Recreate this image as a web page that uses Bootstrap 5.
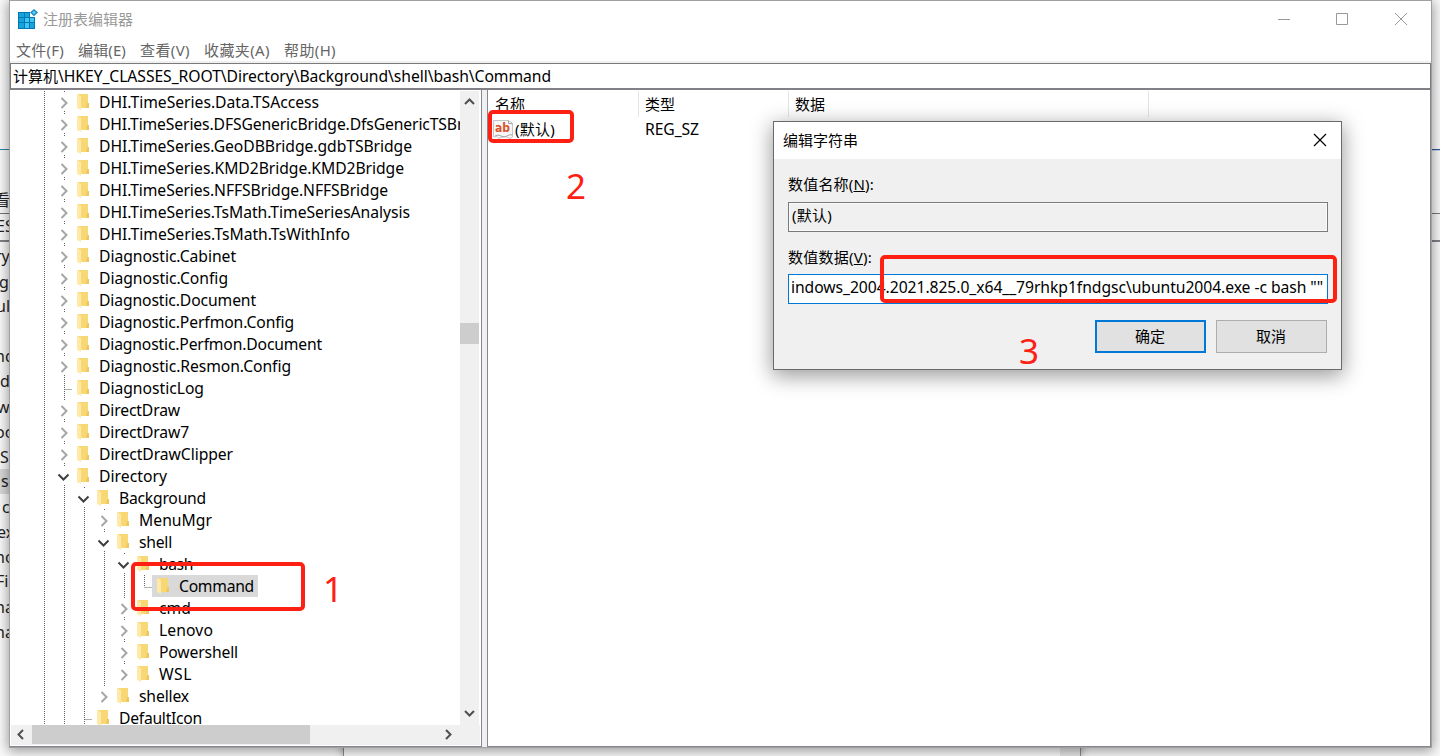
<!DOCTYPE html>
<html lang="zh-CN">
<head>
  <meta charset="UTF-8">
  <meta name="viewport" content="width=device-width, initial-scale=1.0">
  <title>注册表编辑器</title>
  <link href="https://cdn.jsdelivr.net/npm/bootstrap@5.3.0/dist/css/bootstrap.min.css" rel="stylesheet">
  <style>
    body { width: 1440px; height: 756px; background: #fafafa; color: #000; font: 15px/22px "Noto Sans", "Noto Sans CJK SC", sans-serif; }
    svg { display: block; flex: none; }
    .latin { font-size: 15.7px; }

    /* windows behind the editor */
    .back-strip { left: 0; top: 0; width: 10px; height: 756px; }
    .back-strip span { position: absolute; font-size: 16px; line-height: 25px; color: #222; white-space: nowrap; }
    .back-line { position: absolute; left: 0; width: 100%; }
    .back-bottom { left: 343px; top: 740px; width: 738px; height: 16px; border: solid #8c8c8c; border-width: 0 1px; box-shadow: 0 0 10px rgba(0,0,0,.4); background: #fbfbfb; }
    .back-bottom div { width: 20px; background: #e6e6e6; }

    .reg-window { left: 9px; top: 0; width: 1423px; height: 748px; border: 1px solid #a0a0a0; box-shadow: 0 2px 12px 1px rgba(0,0,0,.4); background: #fff; }
    .title-row { height: 37px; color: #999; padding: 0 0 2px 8px; }
    .menu-row { height: 25px; color: #666; gap: 14px; padding-left: 6px; border-bottom: 2px solid #f0f0f0; }
    .menu-row, .menu-row span { line-height: 24px; }
    .path-row { height: 27px; border: 1px solid #7a7a7a; border-bottom: 2px solid #828087; padding-left: 2px; line-height: 24px; }
    .win-buttons { padding-right: 23px; gap: 44px; }
    .win-buttons svg:last-child { margin-left: 1px; }

    .split { height: 657px; background: #f0f0f0; }
    .tree-pane { width: 472px; border-right: 1px solid #828790; border-bottom: 1px solid #828790; background: #fff; padding-top: 1px; }
    .tree-view { width: 450px; height: 634px; }
    .tree-item { height: 22px; flex: none; }
    .tree-item .node-label { line-height: 23px; height: 22px; white-space: pre; padding: 0 4px 0 4px; }
    .is-selected { background: #d9d9d9; }
    .v-scroll { width: 19px; height: 634px; background: #f0f0f0; margin-right: 1px; }
    .v-thumb { height: 21px; background: #cdcdcd; margin-top: 232px; }
    .h-scroll { height: 20px; background: #f0f0f0; margin-left: 1px; margin-right: 1px; }
    .h-thumb { width: 278px; background: #cdcdcd; height: 19px; }

    .value-pane { margin-left: 5px; border-left: 1px solid #828790; border-bottom: 1px solid #828790; border-right: 1px solid #828790; background: #fff; padding-top: 1px; }
    .value-row { height: 25px; }
    .value-row > div { width: 150px; height: 26px; line-height: 26px; padding-left: 6px; }
    .value-row > div:first-child { width: 151px; padding-left: 7px; }
    .value-head > div { border-right: 1px solid #e5e5e5; }
    .value-head > div:last-child { width: 360px; }

    .edit-dialog { left: 773px; top: 121px; width: 569px; height: 249px; border: 1px solid #6a6a6a; background: #f0f0f0; box-shadow: 0 5px 20px 1px rgba(0,0,0,.4); }
    .dialog-title { height: 37px; background: #fff; padding: 0 14px 1px 9px; }
    .dialog-main { padding: 14px 13px 0 14px; }
    .field { height: 30px; border: 1px solid #7a7a7a; line-height: 24px; padding-left: 3px; margin-top: 7px; white-space: pre; overflow: hidden; }
    .field-ro { box-shadow: inset 0 0 0 1px #fafafa; }
    .field-active { border-color: #0078d7; background: #fff; padding-left: 2px; margin-top: 6px; }
    .dlg-btn { width: 111px; height: 33px; border: 1px solid #adadad; background: #e1e1e1; line-height: 30px; padding-right: 1px; }
    .dlg-default { border: 2px solid #0078d7; line-height: 28px; }

    .mark-box { border: 4px solid #ff2014; border-radius: 5px; }
    .mark-num { color: #ff2014; font-size: 35px; line-height: 36px; }
  </style>
</head>
<body class="position-relative overflow-hidden">

  <div class="position-absolute overflow-hidden back-strip" id="backStrip"></div>
  <div class="position-absolute" style="left:1431px;top:0;width:9px;height:756px">
    <div class="back-line" style="top:149px;height:2px;background:#2b579a;border-bottom:1px solid #c8d3e6"></div>
    <div class="back-line" style="top:213px;height:1px;background:#777"></div>
    <div class="back-line" style="top:240px;height:2px;background:#828087"></div>
  </div>
  <div class="position-absolute d-flex justify-content-end back-bottom"><div></div></div>

  <div class="position-absolute d-flex flex-column reg-window">
    <div class="d-flex align-items-center justify-content-between title-row">
      <div class="d-flex align-items-center" style="gap:5px">
        <svg width="20" height="20" viewBox="0 0 20 20">
          <path d="M0 3h12v5h5v12H0z" fill="#0078b4"/>
          <path d="M1 4h5v4H1zM7 4h4v4H7zM1 9h5v4H1zM1 14h5v5H1zM12 14h4v5h-4z" fill="#18a3dc"/>
          <path d="M7 9h4v4H7zM12 9h4v4h-4zM7 14h4v5H7z" fill="#42c5f0"/>
          <path d="M16 0l4 3.600-4 3.600-4-3.600z" fill="#198ac0"/>
          <path d="M16 1.800l2 1.800-2 1.800-2-1.800z" fill="#5cccf0"/>
        </svg>
        <span>注册表编辑器</span>
      </div>
      <div class="d-flex align-items-center win-buttons">
        <svg width="14" height="14" viewBox="0 0 14 14"><path d="M1 7.500h12" stroke="#999"/></svg>
        <svg width="14" height="14" viewBox="0 0 14 14"><path d="M1.500 1.500h11v11h-11z" stroke="#999" fill="none"/></svg>
        <svg width="14" height="14" viewBox="0 0 14 14"><path d="M1 1l12 12M13 1L1 13" stroke="#999"/></svg>
      </div>
    </div>
    <div class="d-flex menu-row">
      <span data-w="48">文件(F)</span><span data-w="48">编辑(E)</span><span data-w="50">查看(V)</span><span data-w="66">收藏夹(A)</span><span data-w="52">帮助(H)</span>
    </div>
    <div class="path-row d-flex"><span>计算机</span><span class="latin" data-w="493">\HKEY_CLASSES_ROOT\Directory\Background\shell\bash\Command</span></div>

    <div class="d-flex split">
      <div class="d-flex flex-column tree-pane">
        <div class="d-flex">
          <div class="d-flex flex-column overflow-hidden tree-view" id="treeView"></div>
          <div class="d-flex flex-column align-items-center v-scroll">
            <svg width="19" height="19" viewBox="0 0 19 19" style="margin-bottom:-19px"><path d="M5 13l4.500-4.500L14 13" fill="none" stroke="#505050" stroke-width="2"/></svg>
            <div class="w-100 v-thumb"></div>
            <svg class="mt-auto" width="19" height="22" viewBox="0 0 19 22"><path d="M5 8l4.500 4.500L14 8" fill="none" stroke="#505050" stroke-width="2"/></svg>
          </div>
        </div>
        <div class="d-flex h-scroll">
          <svg width="21" height="19" viewBox="0 0 21 19"><path d="M12 5L7.500 9.500 12 14" fill="none" stroke="#505050" stroke-width="2"/></svg>
          <div class="h-thumb"></div>
          <svg style="margin-left:129px" width="21" height="19" viewBox="0 0 21 19"><path d="M7 5l4.500 4.500L7 14" fill="none" stroke="#505050" stroke-width="2"/></svg>
        </div>
      </div>

      <div class="flex-grow-1 value-pane">
        <div class="d-flex value-row value-head"><div>名称</div><div>类型</div><div>数据</div></div>
        <div class="d-flex value-row">
          <div class="d-flex align-items-center" style="padding-left:5px;gap:2px">
            <svg width="20" height="20" viewBox="0 0 20 20">
              <path d="M.5 1.500h15l4 3V18q-2 2.500-5 .5t-6 0-5-1l-3 .5z" fill="#f7f7f7" stroke="#c4c4c4"/>
              <path d="M15.500 1.500v3h4M2 17q3-2 6 0t6 0 5-1" fill="none" stroke="#a5a5a5"/>
              <text x="2" y="13" font-family="DejaVu Sans" font-weight="bold" font-size="11.500" textLength="15" lengthAdjust="spacingAndGlyphs" fill="#d9532c">ab</text>
            </svg>
            <span data-w="40">(默认)</span>
          </div>
          <div><span class="latin" data-w="54">REG_SZ</span></div>
        </div>
      </div>
    </div>
  </div>

  <div class="position-absolute edit-dialog">
    <div class="d-flex align-items-center justify-content-between dialog-title">
      <span>编辑字符串</span>
      <svg width="14" height="14" viewBox="0 0 14 14"><path d="M1 1l12 12M13 1L1 13" stroke="#000" stroke-width="1.200"/></svg>
    </div>
    <div class="dialog-main">
      <div><span data-w="86">数值名称(<u>N</u>):</span></div>
      <div class="field field-ro"><span data-w="40">(默认)</span></div>
      <div style="margin-top:14px"><span data-w="84">数值数据(<u>V</u>):</span></div>
      <div class="field field-active"><span class="latin" data-w="532">indows_2004.2021.825.0_x64__79rhkp1fndgsc\ubuntu2004.exe -c bash ""</span></div>
      <div class="d-flex justify-content-end" style="gap:10px;margin-top:16px;padding-right:1px">
        <div class="text-center dlg-btn dlg-default">确定</div>
        <div class="text-center dlg-btn">取消</div>
      </div>
    </div>
  </div>

  <!-- step marks -->
  <div class="position-absolute mark-box" style="left:131px;top:562px;width:174px;height:49px"></div>
  <div class="position-absolute mark-box" style="left:488px;top:110px;width:86px;height:33px"></div>
  <div class="position-absolute mark-box" style="left:880px;top:255px;width:457px;height:48px"></div>
  <div class="position-absolute mark-num" style="left:323px;top:571px">1</div>
  <div class="position-absolute mark-num" style="left:566px;top:168px">2</div>
  <div class="position-absolute mark-num" style="left:1019px;top:333px">3</div>

  <script src="https://cdn.jsdelivr.net/npm/bootstrap@5.3.0/dist/js/bootstrap.bundle.min.js"></script>
  <script>
    // [level, label, label width, state, last child]
    // state: c = collapsed, o = open, l = leaf
    const nodes = [
      [0, 'DHI.TimeSeries.Data.TSAccess', 220, 'c'],
      [0, 'DHI.TimeSeries.DFSGenericBridge.DfsGenericTSBridge', 396, 'c'],
      [0, 'DHI.TimeSeries.GeoDBBridge.gdbTSBridge', 313, 'c'],
      [0, 'DHI.TimeSeries.KMD2Bridge.KMD2Bridge', 305, 'c'],
      [0, 'DHI.TimeSeries.NFFSBridge.NFFSBridge', 289, 'c'],
      [0, 'DHI.TimeSeries.TsMath.TimeSeriesAnalysis', 311, 'c'],
      [0, 'DHI.TimeSeries.TsMath.TsWithInfo', 251, 'c'],
      [0, 'Diagnostic.Cabinet', 137, 'c'],
      [0, 'Diagnostic.Config', 129, 'c'],
      [0, 'Diagnostic.Document', 157, 'c'],
      [0, 'Diagnostic.Perfmon.Config', 195, 'c'],
      [0, 'Diagnostic.Perfmon.Document', 223, 'c'],
      [0, 'Diagnostic.Resmon.Config', 192, 'c'],
      [0, 'DiagnosticLog', 105, 'l'],
      [0, 'DirectDraw', 81, 'c'],
      [0, 'DirectDraw7', 90, 'c'],
      [0, 'DirectDrawClipper', 134, 'c'],
      [0, 'Directory', 68, 'o'],
      [1, 'Background', 87, 'o'],
      [2, 'MenuMgr', 73, 'c'],
      [2, 'shell', 33, 'o'],
      [3, 'bash', 34, 'o'],
      [4, 'Command', 75, 'l', 'last'],
      [3, 'cmd', 32, 'c'],
      [3, 'Lenovo', 54, 'c'],
      [3, 'Powershell', 79, 'c'],
      [3, 'WSL', 33, 'c', 'last'],
      [2, 'shellex', 50, 'c', 'last'],
      [1, 'DefaultIcon', 83, 'l']
    ];

    const dots = (x1, y1, x2, y2) => `<path d="M${x1} ${y1}L${x2} ${y2}" stroke="#606060" stroke-dasharray="1 1"/>`;

    function rowIcon(level, state, last) {
      const x = 54.5 + level * 20;
      let s = dots(34.5, 0, 34.5, 22);
      for (let i = 0; i < level; i++) s += dots(54.5 + i * 20, 0, 54.5 + i * 20, 22);
      if (state === 'l') {
        s += dots(x, 0, x, last ? 12 : 22) + dots(x, 12.5, x + 9, 12.5);
      } else {
        s += dots(x, 0, x, 2);
        if (!last) s += dots(x, 20, x, 22);
        s += state === 'c'
          ? `<path d="M${x - 3} 7l5 5-5 5" fill="none" stroke="#a6a6a6" stroke-width="2"/>`
          : `<path d="M${x - 6} 9.500l5 5 5-5" fill="none" stroke="#404040" stroke-width="2"/>`;
      }
      return `<svg width="${62 + level * 20}" height="22">${s}</svg>`;
    }

    const folder = `<svg width="12" height="16" viewBox="0 0 12 16">
      <path d="M1 0h10v9h1v5H1z" fill="#f8d775"/><path d="M10 9h2v5h-3z" fill="#efc75e"/>
      <path d="M0 0l4 2v14l-4-2z" fill="#ffe9a8"/></svg>`;

    document.getElementById('treeView').innerHTML = nodes.map(([level, label, w, state, last]) => `
      <div class="d-flex tree-item">
        ${rowIcon(level, state, last)}
        <div class="d-flex ${label === 'Command' ? 'is-selected' : ''}" style="padding-left:5px">
          <div style="width:18px;padding-top:3px">${folder}</div>
          <div class="node-label"><span class="latin" data-w="${w}">${label}</span></div>
        </div>
      </div>`).join('');

    // slices of the window that sticks out on the left: [top, left, text]
    const slices = [[188, -6, '看'], [214, -4, 'ES'], [244, -5, 'ry'], [270, -1, 'g'], [294, -4, 'ul'], [344, -5, 'nd'], [369, 0, 'd'],
      [395, -3, 'w'], [420, -5, 'oc'], [445, 0, 'S'], [469, 1, 's'], [495, 2, 'c'], [520, -3, 'ex'], [545, -5, 'no'], [569, -4, 'Fil'],
      [595, -5, 'na'], [620, -5, 'na']];
    document.getElementById('backStrip').innerHTML =
      `<div class="back-line" style="top:149px;height:1px;background:#2e86a8"></div>
       <div class="back-line" style="top:213px;height:1px;background:#777"></div>
       <div class="back-line" style="top:240px;height:2px;background:#828087"></div>
       <div class="back-line" style="top:469px;height:25px;background:#d9d9d9"></div>` +
      slices.map(([top, left, text]) => `<span style="top:${top}px;left:${left}px">${text}</span>`).join('');

    // spread each text over its own width
    document.querySelectorAll('[data-w]').forEach((el) => {
      const gap = (el.dataset.w - el.getBoundingClientRect().width) / el.textContent.length;
      el.style.letterSpacing = gap + 'px';
    });
  </script>
</body>
</html>
